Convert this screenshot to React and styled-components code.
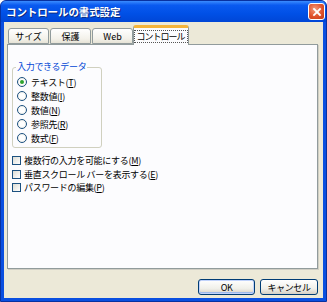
import React from "react";
import styled, { createGlobalStyle } from "styled-components";

const Global = createGlobalStyle`
  html, body { margin: 0; padding: 0; background: #ffffff; }
  body { font-family: "Noto Sans CJK JP", "Noto Sans", sans-serif; }
`;

const Window = styled.div`
  width: 327px;
  height: 302px;
  box-sizing: border-box;
  display: flex;
  flex-direction: column;
  background: #0a4fe0;
  border-radius: 6px 6px 0 0;
  border: 1px solid #0831a0;
  overflow: hidden;
`;

const TitleBar = styled.div`
  height: 21px;
  flex: none;
  display: flex;
  align-items: center;
  justify-content: space-between;
  padding: 0 1px 0 5px;
  background: linear-gradient(#3b8cff 0%, #0a5af0 20%, #0050e6 60%, #0046d6 100%);
`;

const Title = styled.span`
  color: #ffffff;
  font-size: 10.5px;
  font-weight: 700;
  letter-spacing: -0.1px;
  text-shadow: 1px 1px 0 #0a2a80;
`;

const CloseButton = styled.div`
  width: 17px;
  height: 17px;
  box-sizing: border-box;
  border: 1px solid #ffffff;
  border-radius: 3px;
  background: radial-gradient(circle at 40% 35%, #f39a7a 0%, #e0522c 55%, #c23a14 100%);
  display: flex;
  align-items: center;
  justify-content: center;
`;

const Body = styled.div`
  flex: 1;
  margin: 0 3px 3px 3px;
  background: #ece9d8;
  display: flex;
  flex-direction: column;
  padding: 3px 5px 0 3px;
`;

const TabRow = styled.div`
  display: flex;
  align-items: flex-end;
  height: 19px;
  padding-left: 1px;
  position: relative;
  z-index: 1;
`;

const Tab = styled.div`
  box-sizing: border-box;
  width: ${(p) => p.$w}px;
  height: ${(p) => (p.$active ? 20 : 16)}px;
  margin-right: ${(p) => (p.$active ? 0 : 1)}px;
  margin-left: ${(p) => (p.$active ? -1 : 0)}px;
  display: flex;
  align-items: center;
  justify-content: center;
  font-size: 9px;
  color: #000;
  border: 1px solid #919b9c;
  border-bottom: ${(p) => (p.$active ? "none" : "1px solid #919b9c")};
  border-radius: 3px 3px 0 0;
  background: ${(p) =>
    p.$active ? "#fcfcfe" : "linear-gradient(#ffffff, #f3f1ea 70%, #e6e3d6)"};
  border-top: ${(p) => (p.$active ? "3px solid #f5b43a" : "1px solid #919b9c")};
  margin-bottom: ${(p) => (p.$active ? -1 : 0)}px;
  letter-spacing: ${(p) => (p.$tight ? "-1px" : "0")};
`;

const Focus = styled.span`
  border: 1px dotted #555;
  padding: 0 2px 0 1px;
  line-height: 11px;
`;

const Panel = styled.div`
  height: 225px;
  box-sizing: border-box;
  border: 1px solid #919b9c;
  background: #fcfcfe;
  box-shadow: 1px 1px 0 #d0cec4;
  padding: 22px 4px 0 4px;
  display: flex;
  flex-direction: column;
`;

const GroupBox = styled.div`
  position: relative;
  width: 90px;
  height: 81px;
  box-sizing: border-box;
  padding: 7px 0 0 4px;
  border: 1px solid #d0d0bf;
  border-radius: 3px;
  display: flex;
  flex-direction: column;
`;

const Legend = styled.span`
  position: absolute;
  left: 3px;
  top: -7px;
  font-size: 9px;
  color: #0046d5;
  padding: 0 1px;
  line-height: 12px;
  background: #fcfcfe;
  letter-spacing: -0.3px;
`;

const OptionRow = styled.div`
  display: flex;
  align-items: center;
  height: ${(p) => p.$h || 14}px;
  flex: none;
  gap: ${(p) => p.$gap || 4}px;
  font-size: 9px;
  color: #000;
`;

const Radio = styled.span`
  width: 10px;
  height: 10px;
  box-sizing: border-box;
  border-radius: 50%;
  border: 1px solid #1c5180;
  background: radial-gradient(circle, #ffffff 40%, #e4e4dc 100%);
  display: flex;
  align-items: center;
  justify-content: center;
  flex: none;
  &::after {
    content: "";
    width: 4px;
    height: 4px;
    border-radius: 50%;
    background: ${(p) => (p.$checked ? "#2fa32f" : "transparent")};
  }
`;

const CheckList = styled.div`
  display: flex;
  flex-direction: column;
  margin-top: 6px;
`;

const Check = styled.span`
  width: 9px;
  height: 9px;
  box-sizing: border-box;
  border: 1px solid #1c5180;
  background: linear-gradient(135deg, #dcdcd4, #ffffff);
  flex: none;
`;

const Label = styled.span`
  white-space: nowrap;
  letter-spacing: -0.3px;
`;

const ButtonRow = styled.div`
  display: flex;
  justify-content: flex-end;
  gap: 5px;
  margin-top: 10px;
`;

const Button = styled.div`
  width: ${(p) => p.$w}px;
  height: 16px;
  box-sizing: border-box;
  border: 1px solid #003c74;
  border-radius: 3px;
  background: linear-gradient(#ffffff, #f0f0ea 60%, #d6d0c5);
  box-shadow: ${(p) =>
    p.$default ? "inset 0 0 0 1px #c1d3fb, inset 0 -1px 0 1px #9db9eb" : "none"};
  font-size: 9px;
  letter-spacing: -0.4px;
  display: flex;
  align-items: center;
  justify-content: center;
  color: #000;
`;

const Mn = ({ c }) => (
  <>
    (<u>{c}</u>)
  </>
);

const radios = [
  ["テキスト", "T", true],
  ["整数値", "I", false],
  ["数値", "N", false],
  ["参照先", "R", false],
  ["数式", "F", false],
];

const checks = [
  ["複数行の入力を可能にする", "M"],
  ["垂直スクロール バーを表示する", "E"],
  ["パスワードの編集", "P"],
];

export default function App() {
  return (
    <>
      <Global />
      <Window>
        <TitleBar>
          <Title>コントロールの書式設定</Title>
          <CloseButton>
            <svg width="10" height="10" viewBox="0 0 10 10">
              <path d="M2 2 L8 8 M8 2 L2 8" stroke="#fff" strokeWidth="1.8" strokeLinecap="square" />
            </svg>
          </CloseButton>
        </TitleBar>
        <Body>
          <TabRow>
            <Tab $w={41}>サイズ</Tab>
            <Tab $w={41}>保護</Tab>
            <Tab $w={41}>Web</Tab>
            <Tab $w={56} $active $tight>
              <Focus>コントロール</Focus>
            </Tab>
          </TabRow>
          <Panel>
            <GroupBox>
              <Legend>入力できるデータ</Legend>
              {radios.map(([t, k, c]) => (
                <OptionRow key={k}>
                  <Radio $checked={c} />
                  <Label>
                    {t}
                    <Mn c={k} />
                  </Label>
                </OptionRow>
              ))}
            </GroupBox>
            <CheckList>
              {checks.map(([t, k]) => (
                <OptionRow key={k} $gap={3} $h={13.5}>
                  <Check />
                  <Label>
                    {t}
                    <Mn c={k} />
                  </Label>
                </OptionRow>
              ))}
            </CheckList>
          </Panel>
          <ButtonRow>
            <Button $w={57} $default>OK</Button>
            <Button $w={58}>キャンセル</Button>
          </ButtonRow>
        </Body>
      </Window>
    </>
  );
}
